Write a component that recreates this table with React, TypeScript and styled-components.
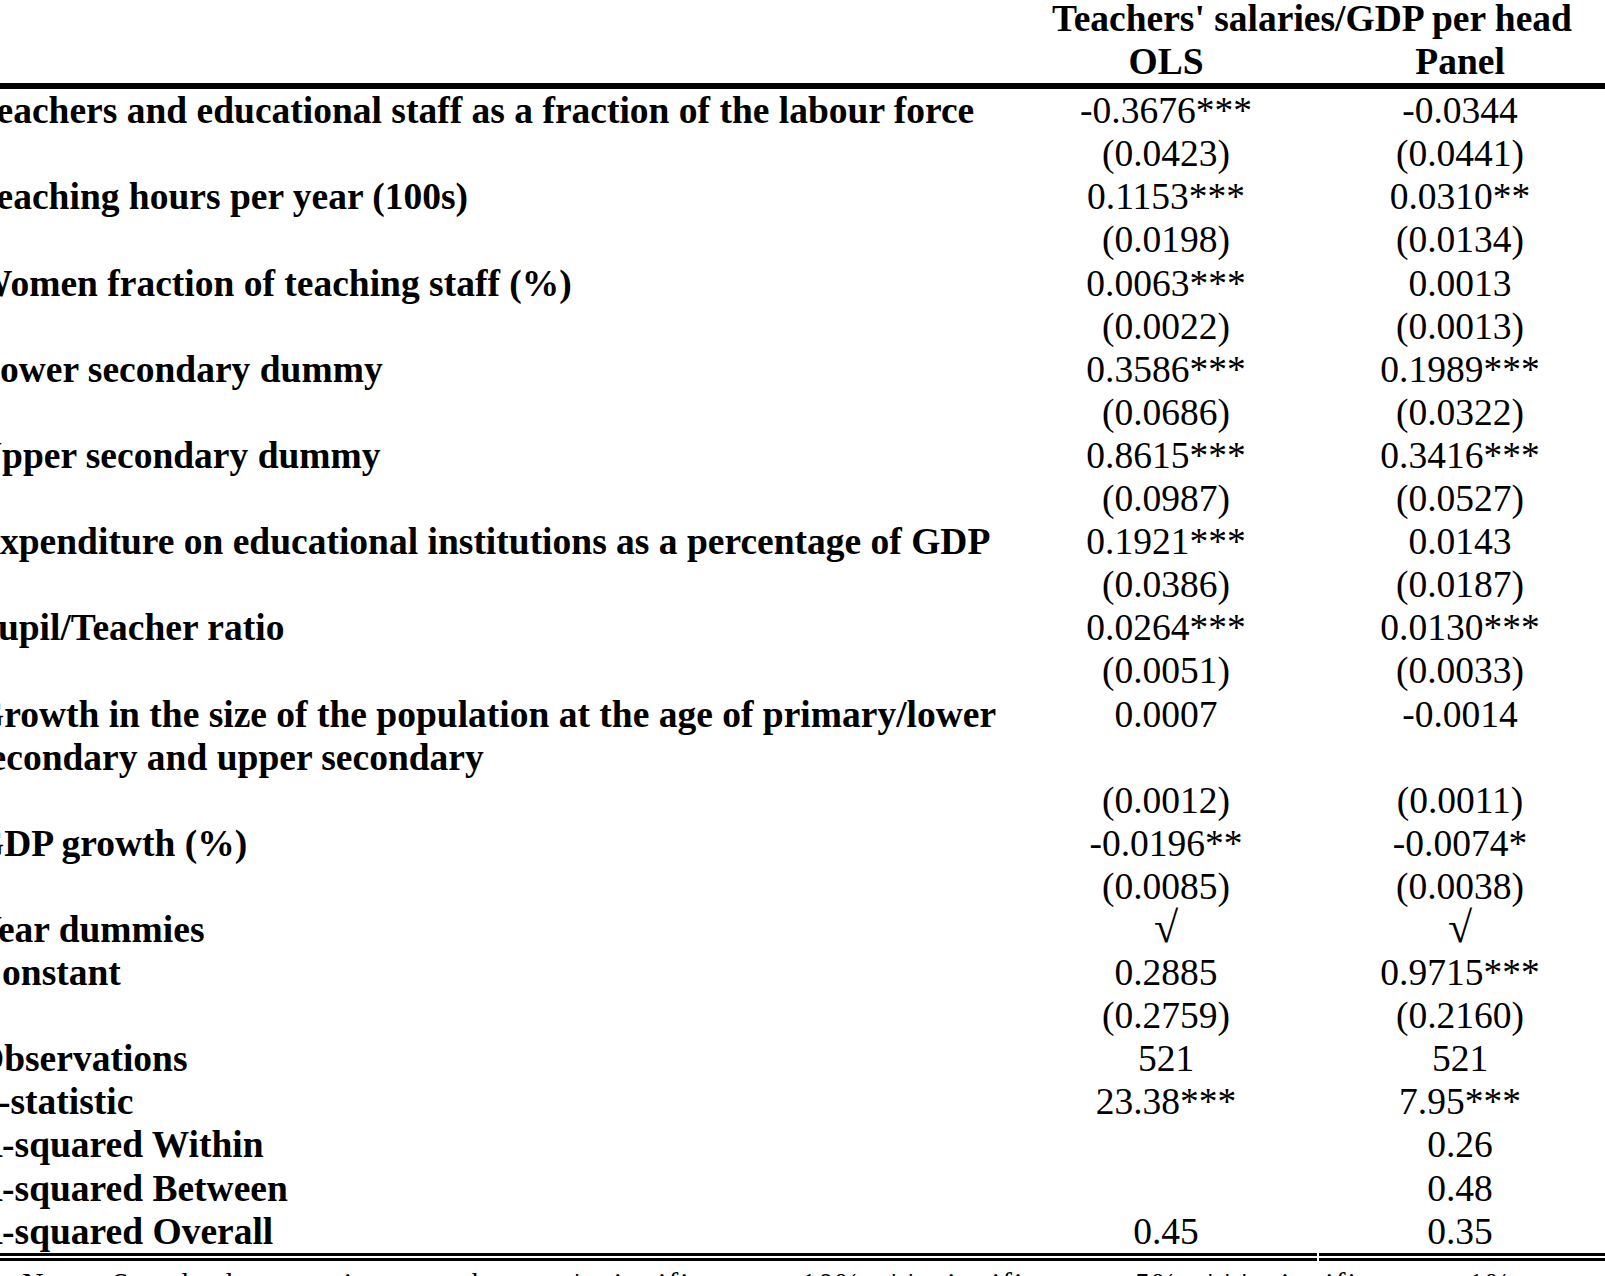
import React from "react";
import styled, { createGlobalStyle } from "styled-components";

const GlobalStyle = createGlobalStyle`
  html, body {
    margin: 0;
    padding: 0;
    background: #fff;
    overflow: hidden;
  }
  body {
    font-family: "Liberation Serif", "Times New Roman", serif;
    color: #000;
  }
`;

type Row = { label?: string; ols?: string; panel?: string };

// regression rows, label rows followed by their standard errors
const ROWS: Row[] = [
    { label: "Teachers and educational staff as a fraction of the labour force", ols: "-0.3676***", panel: "-0.0344" },
    { ols: "(0.0423)", panel: "(0.0441)" },
    { label: "Teaching hours per year (100s)", ols: "0.1153***", panel: "0.0310**" },
    { ols: "(0.0198)", panel: "(0.0134)" },
    { label: "Women fraction of teaching staff (%)", ols: "0.0063***", panel: "0.0013" },
    { ols: "(0.0022)", panel: "(0.0013)" },
    { label: "Lower secondary dummy", ols: "0.3586***", panel: "0.1989***" },
    { ols: "(0.0686)", panel: "(0.0322)" },
    { label: "Upper secondary dummy", ols: "0.8615***", panel: "0.3416***" },
    { ols: "(0.0987)", panel: "(0.0527)" },
    { label: "Expenditure on educational institutions as a percentage of GDP", ols: "0.1921***", panel: "0.0143" },
    { ols: "(0.0386)", panel: "(0.0187)" },
    { label: "Pupil/Teacher ratio", ols: "0.0264***", panel: "0.0130***" },
    { ols: "(0.0051)", panel: "(0.0033)" },
    { label: "Growth in the size of the population at the age of primary/lower secondary and upper secondary", ols: "0.0007", panel: "-0.0014" },
    { ols: "(0.0012)", panel: "(0.0011)" },
    { label: "GDP growth (%)", ols: "-0.0196**", panel: "-0.0074*" },
    { ols: "(0.0085)", panel: "(0.0038)" },
    { label: "Year dummies", ols: "√", panel: "√" },
    { label: "Constant", ols: "0.2885", panel: "0.9715***" },
    { ols: "(0.2759)", panel: "(0.2160)" },
    { label: "Observations", ols: "521", panel: "521" },
    { label: "F-statistic", ols: "23.38***", panel: "7.95***" },
    { label: "R-squared Within", panel: "0.26" },
    { label: "R-squared Between", panel: "0.48" },
    { label: "R-squared Overall", ols: "0.45", panel: "0.35" },
];

const renderValue = (v?: string) => (v === "√" ? <Check>√</Check> : v);

export default function App() {
    return (
        <Page>
            <GlobalStyle />
            <Table>
                <colgroup>
                    <col style={{ width: 1039 }} />
                    <col style={{ width: 304 }} />
                    <col style={{ width: 292 }} />
                </colgroup>
                <thead>
                    <tr>
                        <HeadCell />
                        <HeadCell colSpan={2}>Teachers' salaries/GDP per head</HeadCell>
                    </tr>
                    <tr>
                        <HeadCell $rule />
                        <HeadCell $rule>OLS</HeadCell>
                        <HeadCell $rule $right>Panel</HeadCell>
                    </tr>
                </thead>
                <tbody>
                    {ROWS.map((r, i) => {
                        const last = i === ROWS.length - 1;
                        return (
                            <tr key={i}>
                                <LabelCell $last={last}>{r.label}</LabelCell>
                                <ValueCell $last={last}>{renderValue(r.ols)}</ValueCell>
                                <ValueCell $last={last} $right $notch={last}>{renderValue(r.panel)}</ValueCell>
                            </tr>
                        );
                    })}
                </tbody>
            </Table>
            <Note>Note: Standard errors in parentheses. * significant at 10%; ** significant at 5%; *** significant at 1%</Note>
        </Page>
    );
}

const Page = styled.div`
    width: 1605px;
    height: 1276px;
    overflow: hidden;
`;

const Table = styled.table`
    border-collapse: collapse;
    table-layout: fixed;
    width: 1635px;
    margin: -3px 0 0 -25px;
    font-size: 37.5px;
    line-height: 43.1px;
`;

const HeadCell = styled.th<{ $rule?: boolean; $right?: boolean }>`
    padding: ${(p) => (p.$right ? "0 8px 0 0" : "0")};
    font-weight: bold;
    text-align: center;
    vertical-align: top;
    border-bottom: ${(p) => (p.$rule ? "6px solid #000" : "none")};
`;

const LabelCell = styled.td<{ $last?: boolean }>`
    padding: 0;
    font-weight: bold;
    text-align: left;
    vertical-align: top;
    border-bottom: ${(p) => (p.$last ? "8px double #000" : "none")};
`;

const ValueCell = styled.td<{ $last?: boolean; $right?: boolean; $notch?: boolean }>`
    position: relative;
    padding: ${(p) => (p.$right ? "0 8px 0 0" : "0")};
    font-weight: normal;
    text-align: center;
    vertical-align: top;
    white-space: nowrap;
    border-bottom: ${(p) => (p.$last ? "8px double #000" : "none")};

    &::after {
        content: "";
        display: ${(p) => (p.$notch ? "block" : "none")};
        position: absolute;
        left: -1px;
        bottom: -8px;
        width: 2px;
        height: 8px;
        background: #fff;
    }
`;

const Check = styled.span`
    font-size: 44px;
    line-height: 0;
`;

const Note = styled.p`
    margin: 0;
    padding: 2px 0 0 22px;
    font-size: 30px;
    line-height: 40px;
    letter-spacing: 2px;
    word-spacing: 4px;
    white-space: nowrap;
`;
